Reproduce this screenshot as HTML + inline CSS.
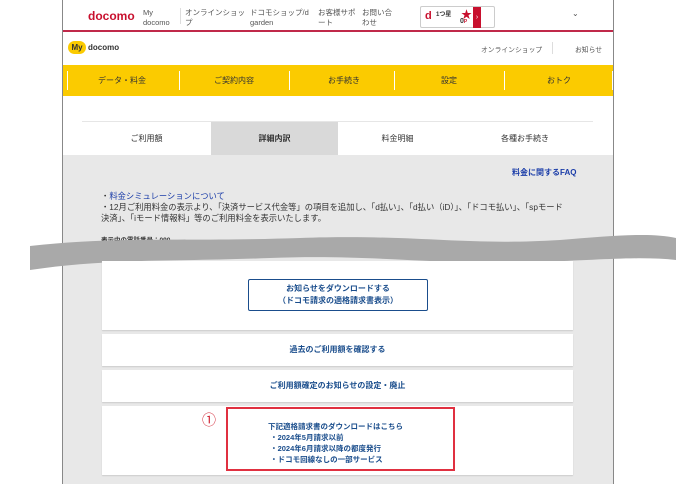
<!DOCTYPE html>
<html><head><meta charset="utf-8"><style>
*{margin:0;padding:0;box-sizing:border-box}
body{width:676px;height:484px;background:#fff;font-family:"Liberation Sans","Noto Sans CJK JP",sans-serif;position:relative;overflow:hidden;color:#333}
.a{position:absolute}
.frame{left:62px;top:0;width:552px;height:484px;border-left:1px solid #888;border-right:1px solid #888;background:#fff}
.t{font-size:7.5px;color:#555;line-height:10px}
.nav{left:63px;top:65px;width:550px;height:31px;background:#fbcb00}
.nav div{position:absolute;top:0;width:110px;height:31px;line-height:31px;font-size:8px;color:#333;text-align:center}
.sep{position:absolute;top:6px;width:1px;height:19px;background:#fff}
.tab{position:absolute;top:121px;height:34px;line-height:34px;text-align:center;font-size:8px;background:#fff;border-top:1px solid #e6e6e6}
.gray{left:63px;top:155px;width:550px;height:329px;background:#e8e8e8}
.box{position:absolute;left:102px;width:471px;background:#fff;box-shadow:0 1px 1px #ccc;text-align:center;color:#1a4d8c;font-size:8px;font-weight:bold}
</style></head><body>
<div class="a frame"></div>
<div class="a" style="left:88px;top:9px;font-size:12px;font-weight:bold;color:#c8102e">docomo</div>
<div class="a t" style="left:143px;top:8px">My<br>docomo</div>
<div class="a" style="left:180px;top:8px;width:1px;height:16px;background:#ddd"></div>
<div class="a t" style="left:185px;top:8px">オンラインショッ<br>プ</div>
<div class="a t" style="left:250px;top:8px">ドコモショップ/d<br>garden</div>
<div class="a t" style="left:318px;top:8px">お客様サポ<br>ート</div>
<div class="a t" style="left:362px;top:8px">お問い合<br>わせ</div>
<div class="a" style="left:420px;top:6px;width:75px;height:22px;border:1px solid #ccc;border-radius:2px"></div>
<div class="a" style="left:425px;top:10px;font-size:11px;font-weight:bold;color:#c8102e">d</div>
<div class="a" style="left:436px;top:9px;font-size:6px;font-weight:bold">1つ星</div>
<div class="a" style="left:461px;top:6px;font-size:11px;color:#c8102e">★</div>
<div class="a" style="left:460px;top:18px;font-size:7px;font-weight:bold">0<span style="color:#c8102e;font-size:5px">P</span></div>
<div class="a" style="left:473px;top:7px;width:8px;height:21px;background:#c8102e;color:#fff;font-size:7px;line-height:21px;text-align:center">›</div>
<div class="a" style="left:572px;top:9px;font-size:8px;color:#555">⌄</div>
<div class="a" style="left:63px;top:30px;width:550px;height:2px;background:#c0294a"></div>
<div class="a" style="left:68px;top:41px;width:18px;height:13px;background:#fbcb00;border-radius:7px;font-size:8px;font-weight:bold;line-height:13px;text-align:center">My</div>
<div class="a" style="left:88px;top:43px;font-size:8px;font-weight:bold">docomo</div>
<div class="a" style="left:481px;top:44px;font-size:6.8px;color:#555">オンラインショップ</div>
<div class="a" style="left:552px;top:42px;width:1px;height:12px;background:#ddd"></div>
<div class="a" style="left:575px;top:44px;font-size:6.8px;color:#555">お知らせ</div>
<div class="a nav">
<span class="sep" style="left:4px"></span>
<div style="left:4px">データ・料金</div><span class="sep" style="left:116px"></span>
<div style="left:116px">ご契約内容</div><span class="sep" style="left:226px"></span>
<div style="left:226px">お手続き</div><span class="sep" style="left:331px"></span>
<div style="left:331px">設定</div><span class="sep" style="left:441px"></span>
<div style="left:441px">おトク</div><span class="sep" style="left:549px"></span>
</div>
<div class="a gray"></div>
<div class="tab" style="left:82px;width:129px">ご利用額</div>
<div class="tab" style="left:211px;width:127px;background:#d9d9d9;font-weight:bold">詳細内訳</div>
<div class="tab" style="left:338px;width:119px">料金明細</div>
<div class="tab" style="left:457px;width:136px">各種お手続き</div>
<div class="a" style="left:512px;top:167px;font-size:8px;font-weight:bold;color:#1a3ca8">料金に関するFAQ</div>
<div class="a" style="left:101px;top:191px;font-size:8.3px;line-height:11px;color:#333;white-space:nowrap">・<span style="color:#1a3ca8">料金シミュレーションについて</span><br>・12月ご利用料金の表示より、「決済サービス代金等」の項目を追加し、「d払い」、「d払い（iD）」、「ドコモ払い」、「spモード<br>決済」、「iモード情報料」等のご利用料金を表示いたします。</div>
<div class="a" style="left:101px;top:234px;font-size:6.5px;font-weight:bold">表示中の電話番号：090</div>
<svg class="a" style="left:0;top:226px" width="676" height="50"><path d="M30 20 C120 10 180 16 300 12 C420 8 460 20 560 14 C610 10 650 6 676 12 L676 34 C640 30 600 34 540 36 C440 40 380 28 270 32 C170 36 110 32 30 44 Z" fill="#a9a9a9"/></svg>
<div class="box" style="top:261px;height:69px"><div style="position:absolute;left:146px;top:18px;width:180px;height:32px;border:1px solid #1a4d8c;border-radius:2px;line-height:12px;padding-top:3px">お知らせをダウンロードする<br>（ドコモ請求の適格請求書表示）</div></div>
<div class="box" style="top:334px;height:32px;line-height:32px">過去のご利用額を確認する</div>
<div class="box" style="top:370px;height:32px;line-height:32px">ご利用額確定のお知らせの設定・廃止</div>
<div class="box" style="top:406px;height:69px"></div>
<div class="a" style="left:226px;top:407px;width:229px;height:64px;border:2px solid #e03040"></div>
<div class="a" style="left:202px;top:410px;font-size:14px;color:#d02030">①</div>
<div class="a" style="left:268px;top:421px;font-size:7.5px;line-height:11px;color:#1a4d8c;font-weight:bold">下記適格請求書のダウンロードはこちら<br>&nbsp;・2024年5月請求以前<br>&nbsp;・2024年6月請求以降の都度発行<br>&nbsp;・ドコモ回線なしの一部サービス</div>
</body></html>
